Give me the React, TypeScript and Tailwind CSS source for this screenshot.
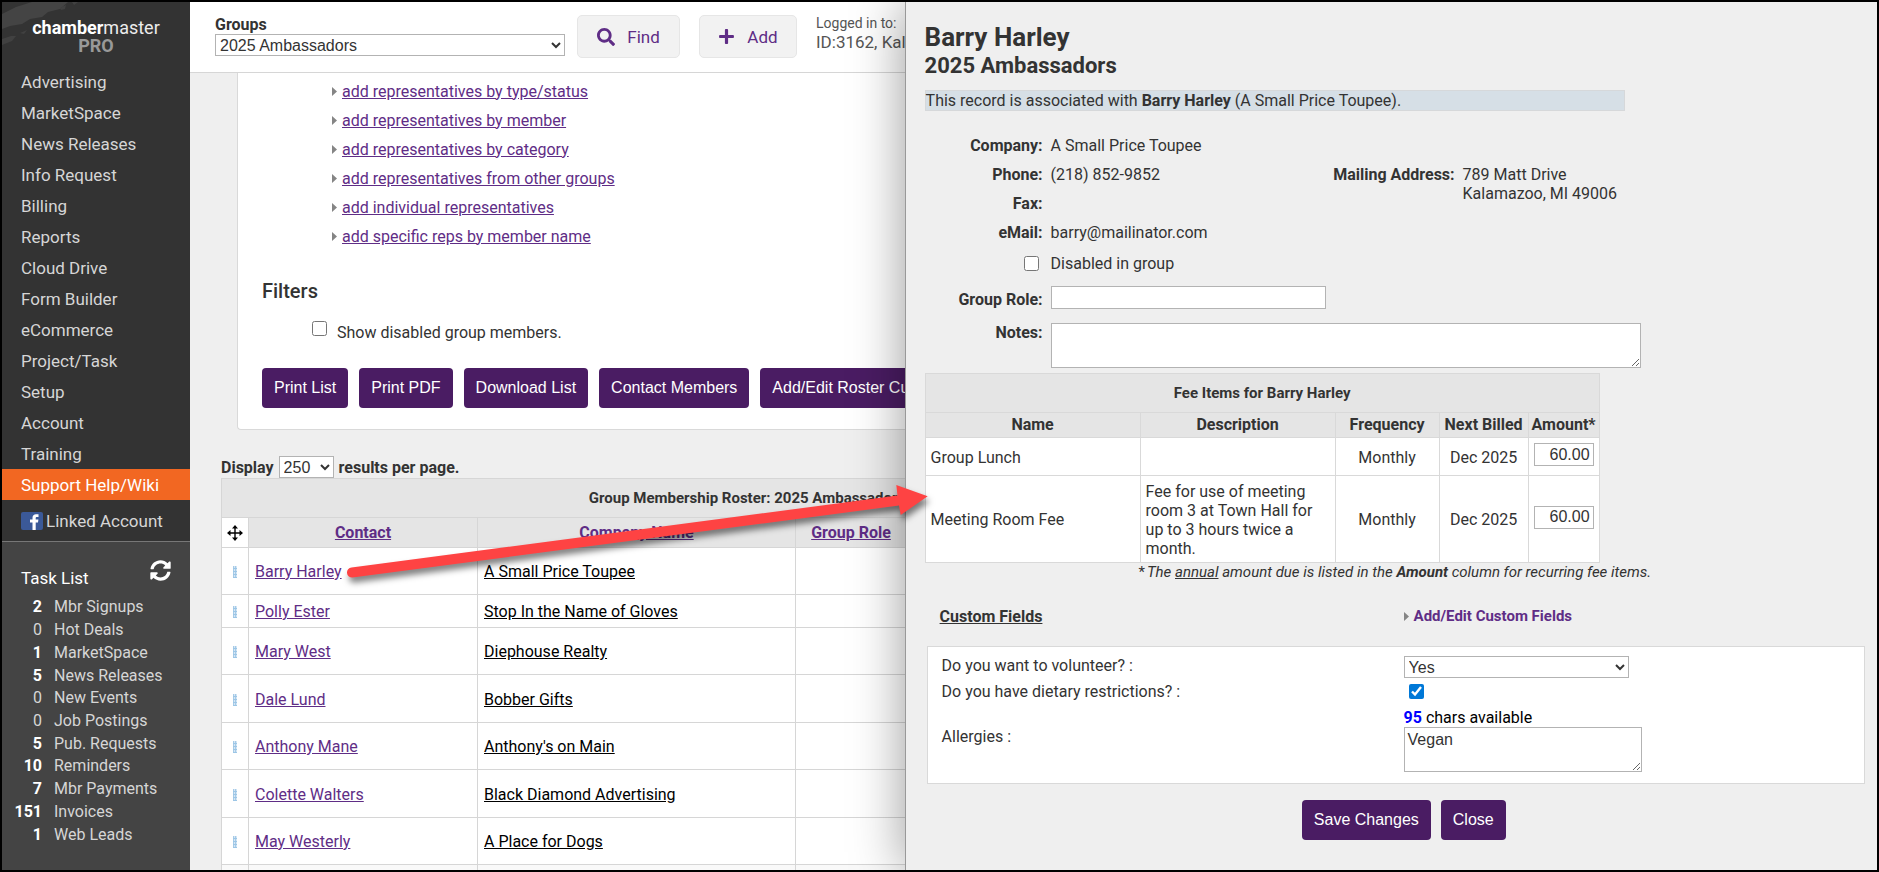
import React, { useState } from "react";
import { FaSearch, FaPlus, FaSyncAlt } from "react-icons/fa";

const navItems = [
  "Advertising",
  "MarketSpace",
  "News Releases",
  "Info Request",
  "Billing",
  "Reports",
  "Cloud Drive",
  "Form Builder",
  "eCommerce",
  "Project/Task",
  "Setup",
  "Account",
  "Training",
];

const tasks = [
  { count: 2, label: "Mbr Signups" },
  { count: 0, label: "Hot Deals" },
  { count: 1, label: "MarketSpace" },
  { count: 5, label: "News Releases" },
  { count: 0, label: "New Events" },
  { count: 0, label: "Job Postings" },
  { count: 5, label: "Pub. Requests" },
  { count: 10, label: "Reminders" },
  { count: 7, label: "Mbr Payments" },
  { count: 151, label: "Invoices" },
  { count: 1, label: "Web Leads" },
];

const addLinks = [
  "add representatives by type/status",
  "add representatives by member",
  "add representatives by category",
  "add representatives from other groups",
  "add individual representatives",
  "add specific reps by member name",
];

const actions = ["Print List", "Print PDF", "Download List", "Contact Members", "Add/Edit Roster Cu"];

const roster = [
  { contact: "Barry Harley", company: "A Small Price Toupee", height: "h-[47px]" },
  { contact: "Polly Ester", company: "Stop In the Name of Gloves", height: "h-[33px]" },
  { contact: "Mary West", company: "Diephouse Realty", height: "h-[47px]" },
  { contact: "Dale Lund", company: "Bobber Gifts", height: "h-[48px]" },
  { contact: "Anthony Mane", company: "Anthony's on Main", height: "h-[47px]" },
  { contact: "Colette Walters", company: "Black Diamond Advertising", height: "h-[48px]" },
  { contact: "May Westerly", company: "A Place for Dogs", height: "h-[47px]" },
];

const fees = [
  { name: "Group Lunch", description: "", frequency: "Monthly", next: "Dec 2025", amount: "60.00", height: "h-[38px]" },
  {
    name: "Meeting Room Fee",
    description: "Fee for use of meeting room 3 at Town Hall for up to 3 hours twice a month.",
    frequency: "Monthly",
    next: "Dec 2025",
    amount: "60.00",
    height: "h-[87px]",
  },
];

const fieldClass = "border border-[#b3b3b3] bg-white font-['Liberation_Sans',Arial,sans-serif] text-base text-[#333]";

const PurpleButton = ({ children }: { children: React.ReactNode }) => (
  <button
    type="button"
    className="h-10 shrink-0 cursor-pointer rounded-[4px] bg-[#4a1c63] px-3 font-['Liberation_Sans',Arial,sans-serif] text-base whitespace-nowrap text-white"
  >
    {children}
  </button>
);

const Triangle = () => (
  <svg className="h-[9px] w-[5px] shrink-0" viewBox="0 0 5 9" aria-hidden="true">
    <path d="M0 0L5 4.5L0 9Z" fill="#858585" />
  </svg>
);

const MoveIcon = () => (
  <svg className="mx-auto size-4" viewBox="0 0 16 16" aria-hidden="true">
    <path d="M8 2V14M2 8H14" stroke="#000" strokeWidth="1.4" />
    <path d="M8 0L11 3.5H5ZM8 16L11 12.5H5ZM0 8L3.5 5V11ZM16 8L12.5 5V11Z" fill="#000" />
  </svg>
);

const DragHandle = () => (
  <svg className="mx-auto h-3 w-1" viewBox="0 0 4 12" aria-hidden="true">
    <path d="M0 0H4V12H0Z" fill="#d4e6f5" />
    <path d="M0 1H4M0 4H4M0 7H4M0 10H4" stroke="#79afd9" strokeDasharray="1 1" />
    <path d="M0 2.5H4M0 5.5H4M0 8.5H4M0 11.5H4" stroke="#9cc6e6" />
  </svg>
);

const Sidebar = () => (
  <aside className="relative flex w-[188px] shrink-0 flex-col bg-[#333] text-[#d6d6d6]">
    <svg className="absolute top-0 left-0 h-[46px] w-[84px]" viewBox="0 0 84 46" aria-hidden="true">
      <path d="M0 12L14 5L30 0H66L58 7L46 10L40 15L28 17L20 22L8 24L0 27Z" fill="#444" />
      <path d="M0 37L9 34L14 34L10 39L0 43ZM18 31L25 28L22 32ZM58 6L64 3L63 7L59 8ZM70 0H76L72 3Z" fill="#414141" />
    </svg>
    <div className="relative h-16 pt-[17px] text-center text-lg leading-[18px]">
      <div className="text-[#ececec]">
        <span className="font-bold text-white">chamber</span>master
      </div>
      <div className="font-bold text-[#999]">PRO</div>
    </div>
    <nav className="text-[17px]">
      {navItems.map((item) => (
        <a key={item} href="#" className="flex h-[31px] items-center pl-[19px]">
          {item}
        </a>
      ))}
      <a href="#" className="flex h-[31px] items-center bg-[#f26722] pl-[19px] text-white">
        Support Help/Wiki
      </a>
      <a href="#" className="flex h-[42px] items-center gap-[3px] border-b border-[#777] pl-[19px]">
        <svg className="h-[18px] w-[22px]" viewBox="0 0 22 18" aria-hidden="true">
          <rect width="22" height="18" rx="2" fill="#3b5998" />
          <path d="M11.5 18V10.500H9V7.500H11.500V5.800C11.500 3.400 12.900 2.200 15 2.200H17.500V5H16C15 5 14.700 5.400 14.700 6.200V7.500H17.400L17 10.500H14.700V18Z" fill="#fff" />
        </svg>
        Linked Account
      </a>
    </nav>
    <section className="flex-1 bg-[#444]">
      <div className="flex h-[54px] items-start justify-between pr-[19px] pl-[19px]">
        <h2 className="pt-[26px] text-[17px] leading-5 text-white">Task List</h2>
        <button type="button" aria-label="Refresh task list" className="mt-[18px] text-white">
          <FaSyncAlt size={21} />
        </button>
      </div>
      <ul className="grid h-[250px] grid-rows-11 text-base leading-5">
        {tasks.map((task) => (
          <li key={task.label} className="flex items-center gap-3">
            <span className={task.count > 0 ? "w-10 text-right font-bold text-white" : "w-10 text-right"}>
              {task.count}
            </span>
            <a href="#">{task.label}</a>
          </li>
        ))}
      </ul>
    </section>
  </aside>
);

const TopBar = () => (
  <header className="flex h-[71px] shrink-0 items-start border-b border-[#d6d6d6] bg-white pt-[13px] pl-[25px]">
    <div className="mr-3 flex w-[350px] shrink-0 flex-col">
      <label htmlFor="group" className="leading-[19px] font-bold">
        Groups
      </label>
      <select id="group" className={`${fieldClass} h-[22px] w-full`}>
        <option>2025 Ambassadors</option>
      </select>
    </div>
    <button
      type="button"
      className="mr-[19px] flex h-[43px] w-[103px] shrink-0 items-center justify-center gap-3 rounded-[5px] border border-[#e6e6e6] bg-[#f2f2f2] text-[17px] text-[#5f2d86]"
    >
      <FaSearch size={18} /> Find
    </button>
    <button
      type="button"
      className="mr-[19px] flex h-[43px] w-[98px] shrink-0 items-center justify-center gap-3 rounded-[5px] border border-[#e6e6e6] bg-[#f2f2f2] text-[17px] text-[#5f2d86]"
    >
      <FaPlus size={17} /> Add
    </button>
    <div className="whitespace-nowrap text-[#555]">
      <div className="text-sm leading-[17px]">Logged in to:</div>
      <div className="text-[17px] leading-5">ID:3162, Kal</div>
    </div>
  </header>
);

const Roster = () => {
  const [showDisabled, setShowDisabled] = useState(false);

  return (
    <main className="flex w-0 flex-[715] flex-col overflow-hidden bg-[#efefef]">
      <TopBar />
      <div className="ml-[47px] w-[1036px] shrink-0 rounded-bl-[4px] border-b border-l border-[#d9d9d9] bg-white pt-1 pb-[21px] pl-6">
        <ul className="pl-[70px]">
          {addLinks.map((link) => (
            <li key={link} className="flex h-[29px] items-center gap-[5px]">
              <Triangle />
              <a href="#" className="text-[#5f2d86] underline">
                {link}
              </a>
            </li>
          ))}
        </ul>
        <h3 className="mt-7 text-xl leading-6 font-medium">Filters</h3>
        <div className="mt-[18px] flex h-5 items-start gap-[10px] pl-[50px]">
          <input
            id="show-disabled"
            type="checkbox"
            className="size-[15px]"
            checked={showDisabled}
            onChange={(e) => setShowDisabled(e.target.checked)}
          />
          <label htmlFor="show-disabled" className="leading-6">
            Show disabled group members.
          </label>
        </div>
        <div className="mt-[27px] flex gap-[11px]">
          {actions.map((action) => (
            <PurpleButton key={action}>{action}</PurpleButton>
          ))}
        </div>
      </div>

      <div className="mt-[26px] flex h-[22px] shrink-0 items-center gap-[5px] pl-[31px] leading-[22px] font-bold">
        <label htmlFor="per-page" className="pt-[2px]">
          Display
        </label>
        <select id="per-page" className={`${fieldClass} h-[22px] w-[55px] font-normal`}>
          <option>250</option>
        </select>
        <span className="pt-[2px]">results per page.</span>
      </div>

      <table className="ml-[31px] w-[1052px] shrink-0 table-fixed border-collapse">
        <colgroup>
          <col className="w-[27px]" />
          <col className="w-[229px]" />
          <col className="w-[318px]" />
          <col className="w-[111px]" />
          <col />
        </colgroup>
        <thead className="bg-[#e5e5e5]">
          <tr>
            <th colSpan={5} className="h-[39px] border border-[#d6d6d6] text-[15px]">
              Group Membership Roster: 2025 Ambassadors
            </th>
          </tr>
          <tr className="text-[#5f2d86]">
            <th className="h-[30px] border border-[#d6d6d6] bg-white">
              <MoveIcon />
            </th>
            <th className="border border-[#d6d6d6]">
              <a href="#" className="underline">Contact</a>
            </th>
            <th className="border border-[#d6d6d6]">
              <a href="#" className="underline">Company Name</a>
            </th>
            <th className="border border-[#d6d6d6]">
              <a href="#" className="underline">Group Role</a>
            </th>
            <th className="border border-[#d6d6d6]" />
          </tr>
        </thead>
        <tbody className="bg-white">
          {roster.map((row) => (
            <tr key={row.contact}>
              <td className={`border border-[#d6d6d6] pt-[2px] ${row.height}`}>
                <DragHandle />
              </td>
              <td className="border border-[#d6d6d6] pt-[2px] pl-[6px]">
                <a href="#" className="text-[#5f2d86] underline">{row.contact}</a>
              </td>
              <td className="border border-[#d6d6d6] pt-[2px] pl-[6px]">
                <a href="#" className="text-black underline">{row.company}</a>
              </td>
              <td className="border border-[#d6d6d6]" />
              <td className="border border-[#d6d6d6]" />
            </tr>
          ))}
          <tr className="bg-[#f9f9f9]">
            <td className="h-12 border border-[#d6d6d6]" />
            <td className="border border-[#d6d6d6]" />
            <td className="border border-[#d6d6d6]" />
            <td className="border border-[#d6d6d6]" />
            <td className="border border-[#d6d6d6]" />
          </tr>
        </tbody>
      </table>
    </main>
  );
};

const FeeTable = () => (
  <table className="mt-[5px] w-[675px] table-fixed border-collapse">
    <colgroup>
      <col className="w-[215px]" />
      <col className="w-[195px]" />
      <col className="w-[104px]" />
      <col className="w-[89px]" />
      <col className="w-[71px]" />
    </colgroup>
    <thead className="bg-[#e5e5e5]">
      <tr>
        <th colSpan={5} className="h-[39px] border border-[#d9d9d9] text-[15px]">
          Fee Items for Barry Harley
        </th>
      </tr>
      <tr className="whitespace-nowrap">
        <th className="h-[25px] border border-[#d9d9d9]">Name</th>
        <th className="border border-[#d9d9d9]">Description</th>
        <th className="border border-[#d9d9d9]">Frequency</th>
        <th className="border border-[#d9d9d9]">Next Billed</th>
        <th className="border border-[#d9d9d9]">Amount*</th>
      </tr>
    </thead>
    <tbody className="bg-white">
      {fees.map((fee) => (
        <tr key={fee.name}>
          <td className={`border border-[#d9d9d9] pt-[2px] pl-[5px] ${fee.height}`}>{fee.name}</td>
          <td className="border border-[#d9d9d9] px-[5px] pt-[2px] leading-[19px]">{fee.description}</td>
          <td className="border border-[#d9d9d9] pt-[2px] text-center">{fee.frequency}</td>
          <td className="border border-[#d9d9d9] pt-[2px] text-center">{fee.next}</td>
          <td className="border border-[#d9d9d9] pb-1 text-center leading-none">
            <input
              aria-label={`${fee.name} amount`}
              defaultValue={fee.amount}
              className={`${fieldClass} h-[23px] w-[60px] pr-[3px] text-right`}
            />
          </td>
        </tr>
      ))}
    </tbody>
  </table>
);

const RecordPanel = () => (
  <section className="z-10 w-0 flex-[972] border-l border-[#999] bg-[#efefef] shadow-[0_0_50px_rgba(0,0,0,0.4)]">
    <div className="flex flex-col pt-5 pr-3 pl-[19px]">
      <h1 className="text-[26px] leading-[30px] font-bold">Barry Harley</h1>
      <h2 className="text-[22px] leading-[28px] font-bold">2025 Ambassadors</h2>
      <p className="mt-[10px] h-[21px] w-[700px] border border-[#d6d8da] bg-[#d6dfe6] leading-[19px]">
        This record is associated with <b>Barry Harley</b> (A Small Price Toupee).
      </p>

      <div className="mt-5 flex">
        <dl className="grid w-[400px] auto-rows-[29px] grid-cols-[118px_1fr] items-center gap-x-2">
          <dt className="text-right font-bold">Company:</dt>
          <dd>A Small Price Toupee</dd>
          <dt className="text-right font-bold">Phone:</dt>
          <dd>(218) 852-9852</dd>
          <dt className="text-right font-bold">Fax:</dt>
          <dd />
          <dt className="text-right font-bold">eMail:</dt>
          <dd>barry@mailinator.com</dd>
        </dl>
        <dl className="mt-[34px] flex gap-2 leading-[19px]">
          <dt className="w-[130px] text-right font-bold">Mailing Address:</dt>
          <dd>
            789 Matt Drive
            <br />
            Kalamazoo, MI 49006
          </dd>
        </dl>
      </div>

      <div className="flex h-8 items-center gap-3 pl-[99px]">
        <input id="disabled" type="checkbox" className="size-[15px]" />
        <label htmlFor="disabled" className="pt-[2px]">
          Disabled in group
        </label>
      </div>
      <div className="mt-[7px] flex h-[23px] items-start gap-2">
        <label htmlFor="role" className="w-[118px] pt-1 text-right leading-[19px] font-bold">
          Group Role:
        </label>
        <input id="role" type="text" className={`${fieldClass} h-[23px] w-[275px]`} />
      </div>
      <div className="mt-[14px] flex items-start gap-2">
        <label htmlFor="notes" className="w-[118px] text-right leading-[19px] font-bold">
          Notes:
        </label>
        <textarea id="notes" className={`${fieldClass} block h-[45px] w-[590px]`} />
      </div>

      <FeeTable />
      <p className="text-center text-[15px] leading-[18px] italic">
        <span className="pr-[2px] not-italic">*</span>The <u>annual</u> amount due is listed in the <b>Amount</b>{" "}
        column for recurring fee items.
      </p>

      <div className="mt-[25px] grid grid-cols-[464px_1fr] items-center pl-[15px]">
        <h3 className="leading-[19px] font-bold underline">Custom Fields</h3>
        <a href="#" className="flex items-center gap-[5px] text-[15px] font-bold text-[#5f2d86]">
          <Triangle /> Add/Edit Custom Fields
        </a>
      </div>

      <div className="mt-5 ml-[2px] border border-[#d9d9d9] bg-white pt-[9px] pb-[11px] pl-[14px] leading-[19px]">
        <div className="grid grid-cols-[462px_1fr] items-start">
          <label htmlFor="volunteer">Do you want to volunteer? :</label>
          <select id="volunteer" className={`${fieldClass} h-[22px] w-[225px]`}>
            <option>Yes</option>
            <option>No</option>
          </select>
        </div>
        <div className="grid h-[26px] grid-cols-[462px_1fr] items-center">
          <label htmlFor="dietary">Do you have dietary restrictions? :</label>
          <input id="dietary" type="checkbox" defaultChecked className="ml-[5px] size-[15px] accent-[#0078d7]" />
        </div>
        <div className="mt-1 grid grid-cols-[462px_1fr] items-start">
          <label htmlFor="allergies" className="pt-[19px]">
            Allergies :
          </label>
          <div>
            <div className="text-black">
              <b className="text-[#0000ff]">95</b> chars available
            </div>
            <textarea
              id="allergies"
              defaultValue="Vegan"
              className={`${fieldClass} block h-[45px] w-[238px] px-[3px] pt-[2px] leading-[19px]`}
            />
          </div>
        </div>
      </div>

      <div className="mt-4 flex justify-center gap-[10px] pl-[18px]">
        <PurpleButton>Save Changes</PurpleButton>
        <PurpleButton>Close</PurpleButton>
      </div>
    </div>
  </section>
);

const App: React.FC = () => (
  <div className="relative flex h-screen overflow-hidden border-2 border-black bg-[#efefef] font-[Roboto,sans-serif] text-base leading-5 text-[#333]">
    <Sidebar />
    <Roster />
    <RecordPanel />
    {/* Callout arrow from the contact to its record */}
    <svg
      className="pointer-events-none absolute top-[470px] left-[338px] z-20 h-[120px] w-[600px] drop-shadow-[2px_5px_3px_rgba(0,0,0,0.5)]"
      viewBox="340 472 600 120"
      aria-hidden="true"
    >
      <path
        d="M351.500 567.500L897.500 495.500L896.300 485L927.700 496.300L900.700 515L899 505.500L352.500 577.500A5 5 0 0 1 351.500 567.500Z"
        fill="#fe4343"
      />
    </svg>
  </div>
);

export default App;
